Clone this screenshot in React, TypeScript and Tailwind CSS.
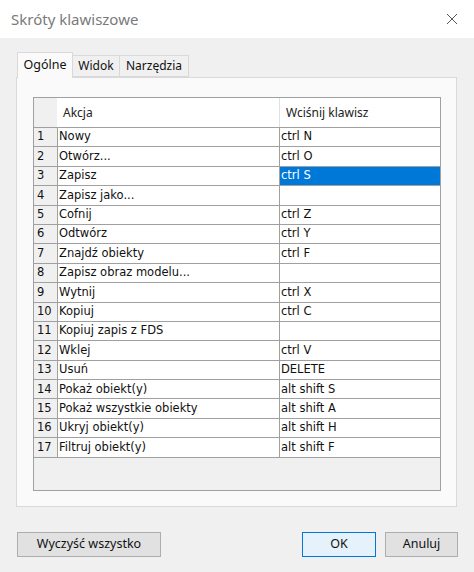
import React from "react";

const rows: [string, string][] = [
  ["Nowy", "ctrl N"],
  ["Otwórz...", "ctrl O"],
  ["Zapisz", "ctrl S"],
  ["Zapisz jako...", ""],
  ["Cofnij", "ctrl Z"],
  ["Odtwórz", "ctrl Y"],
  ["Znajdź obiekty", "ctrl F"],
  ["Zapisz obraz modelu...", ""],
  ["Wytnij", "ctrl X"],
  ["Kopiuj", "ctrl C"],
  ["Kopiuj zapis z FDS", ""],
  ["Wklej", "ctrl V"],
  ["Usuń", "DELETE"],
  ["Pokaż obiekt(y)", "alt shift S"],
  ["Pokaż wszystkie obiekty", "alt shift A"],
  ["Ukryj obiekt(y)", "alt shift H"],
  ["Filtruj obiekt(y)", "alt shift F"],
];

const ui = { fontFamily: '"Noto Sans", "Open Sans", sans-serif' };
const cell = { fontFamily: '"DejaVu Sans", "Liberation Sans", sans-serif' };

export default function App() {
  return (
    <div className="w-[474px] h-[572px] bg-[#f0f0f0] flex flex-col overflow-hidden" style={ui}>
      <div className="h-[38px] bg-white flex items-center justify-between pl-[11px] pr-[16px]">
        <span className="text-[15px] text-[#7a7a7a]">Skróty klawiszowe</span>
        <svg width="12" height="12" viewBox="0 0 12 12">
          <path d="M1 1 L11 11 M11 1 L1 11" stroke="#555" strokeWidth="1" />
        </svg>
      </div>
      <div className="flex flex-col pl-[16px] pr-[17px] pt-[14px]">
        <div className="flex items-end h-[25px] pl-[1px] relative z-10">
          <div className="h-[26px] w-[56px] bg-[#fafafa] border border-[#d9d9d9] border-b-0 flex items-center justify-center text-[12.5px] text-[#111] mb-[-1px]">
            Ogólne
          </div>
          <div className="h-[22px] w-[47px] bg-[#f0f0f0] border border-[#d9d9d9] border-l-0 flex items-center justify-center text-[12px] text-[#111]">
            Widok
          </div>
          <div className="h-[22px] w-[69px] bg-[#f0f0f0] border border-[#d9d9d9] border-l-0 flex items-center justify-center text-[12px] text-[#111]">
            Narzędzia
          </div>
        </div>
        <div className="h-[430px] bg-[#fafafa] border border-[#d9d9d9] pl-[16px] pr-[15px] pt-[19px] pb-[15px]">
          <div className="h-full border border-[#a0a0a0] bg-[#f0f0f0] flex flex-col" style={cell}>
            <div className="flex h-[29px] shrink-0">
              <div className="w-[23px] bg-[#f0f0f0]" />
              <div className="w-[222px] bg-white flex items-center pl-[6px] text-[12px] text-[#222]" style={ui}>
                Akcja
              </div>
              <div className="flex-1 bg-white border-l border-[#e0e0e0] flex items-center pl-[6px] text-[12px] text-[#222]" style={ui}>
                Wciśnij klawisz
              </div>
            </div>
            {rows.map(([a, k], i) => {
              const sel = i === 2;
              return (
                <div key={i} className="flex h-[19.4px] shrink-0 border-t border-[#a0a0a0] text-[11.5px] text-[#111] leading-none">
                  <div className="w-[23px] bg-[#f0f0f0] flex items-center pl-[3px]">{i + 1}</div>
                  <div className="w-[222px] bg-white border-l border-[#a0a0a0] flex items-center pl-[1px]">{a}</div>
                  <div
                    className={
                      sel
                        ? "flex-1 bg-[#0078d7] text-white border-l border-[#a0a0a0] flex items-center pl-[1px]"
                        : "flex-1 bg-white border-l border-[#a0a0a0] flex items-center pl-[1px]"
                    }
                  >
                    {k}
                  </div>
                </div>
              );
            })}
            <div className="border-t border-[#a0a0a0]" />
          </div>
        </div>
      </div>
      <div className="flex items-center justify-between pl-[17px] pr-[16px] mt-[25px]">
        <button className="w-[144px] h-[25px] bg-[#e1e1e1] border border-[#adadad] text-[12.5px] text-[#111]">
          Wyczyść wszystko
        </button>
        <div className="flex gap-[9px]">
          <button className="w-[74px] h-[25px] bg-[#e5f1fb] border border-[#0078d7] text-[12.5px] text-[#111]">
            OK
          </button>
          <button className="w-[73px] h-[25px] bg-[#e1e1e1] border border-[#adadad] text-[12.5px] text-[#111]">
            Anuluj
          </button>
        </div>
      </div>
    </div>
  );
}
